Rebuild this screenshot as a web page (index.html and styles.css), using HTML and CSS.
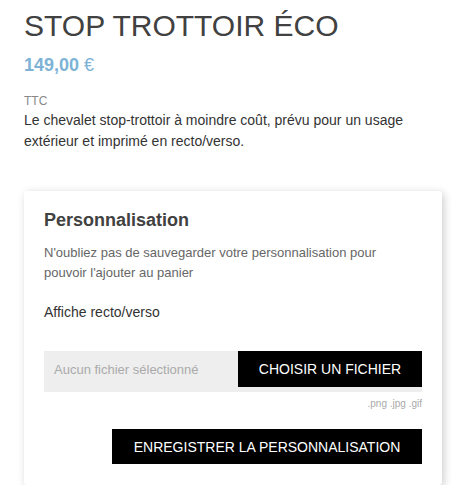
FILE: index.html
```html
<!DOCTYPE html>
<html lang="fr">
<head>
<meta charset="utf-8">
<title>Stop trottoir éco</title>
<link rel="stylesheet" href="styles.css">
</head>
<body>
<main class="product">
  <h1 class="title">STOP TROTTOIR ÉCO</h1>
  <div class="price"><span class="amount">149,00</span> <span class="currency">€</span></div>
  <div class="tax">TTC</div>
  <p class="desc">Le chevalet stop-trottoir à moindre coût, prévu pour un usage extérieur et imprimé en recto/verso.</p>

  <section class="card">
    <h2 class="card-title">Personnalisation</h2>
    <p class="card-note">N'oubliez pas de sauvegarder votre personnalisation pour pouvoir l'ajouter au panier</p>
    <div class="field-label">Affiche recto/verso</div>
    <div class="file-row">
      <span class="file-name">Aucun fichier sélectionné</span>
      <span class="file-btn">CHOISIR UN FICHIER</span>
    </div>
    <div class="file-hint">.png .jpg .gif</div>
    <div class="actions">
      <button class="save-btn">ENREGISTRER LA PERSONNALISATION</button>
    </div>
  </section>
</main>
</body>
</html>
```

FILE: styles.css
```css
* { box-sizing: border-box; }
body {
  margin: 0;
  font-family: "Liberation Sans", Arial, sans-serif;
  background: #fff;
  color: #333;
}
.product {
  padding: 8px 15px 0 24px;
}
.title {
  margin: 0;
  font-size: 30px;
  font-weight: 400;
  line-height: 36px;
  color: #414141;
}
.price {
  margin-top: 10px;
  font-size: 18px;
  line-height: 22px;
  color: #7db3d6;
}
.amount { font-weight: 700; }
.currency { font-weight: 400; }
.tax {
  margin-top: 18px;
  font-size: 12px;
  line-height: 14px;
  color: #888;
}
.desc {
  margin: 2px 0 0;
  font-size: 14px;
  line-height: 21px;
  color: #333;
}
.card {
  margin-top: 39px;
  width: 418px;
  padding: 18px 20px 21px;
  border-radius: 3px;
  background: #fff;
  box-shadow: 2px 2px 8px rgba(0,0,0,0.2);
}
.card-title {
  margin: 0;
  font-size: 18px;
  font-weight: 700;
  line-height: 22px;
  color: #414141;
}
.card-note {
  margin: 12px 0 0;
  font-size: 13px;
  line-height: 20px;
  color: #666;
}
.field-label {
  margin-top: 20px;
  font-size: 14px;
  line-height: 18px;
  color: #333;
}
.file-row {
  margin-top: 30px;
  display: flex;
  align-items: flex-start;
  height: 41px;
  background: #eee;
}
.file-name {
  flex: 1;
  padding: 11px 10px 0;
  font-size: 13px;
  color: #aaa;
}
.file-btn {
  width: 184px;
  height: 36px;
  display: flex;
  align-items: center;
  justify-content: center;
  background: #000;
  color: #fff;
  font-size: 14px;
}
.file-hint {
  margin-top: 6px;
  text-align: right;
  font-size: 10px;
  line-height: 12px;
  color: #aaa;
}
.actions {
  margin-top: 19px;
  display: flex;
  justify-content: flex-end;
}
.save-btn {
  width: 310px;
  height: 35px;
  border: 0;
  background: #000;
  color: #fff;
  font-family: "Liberation Sans", Arial, sans-serif;
  font-size: 14px;
  padding: 0;
}
```
